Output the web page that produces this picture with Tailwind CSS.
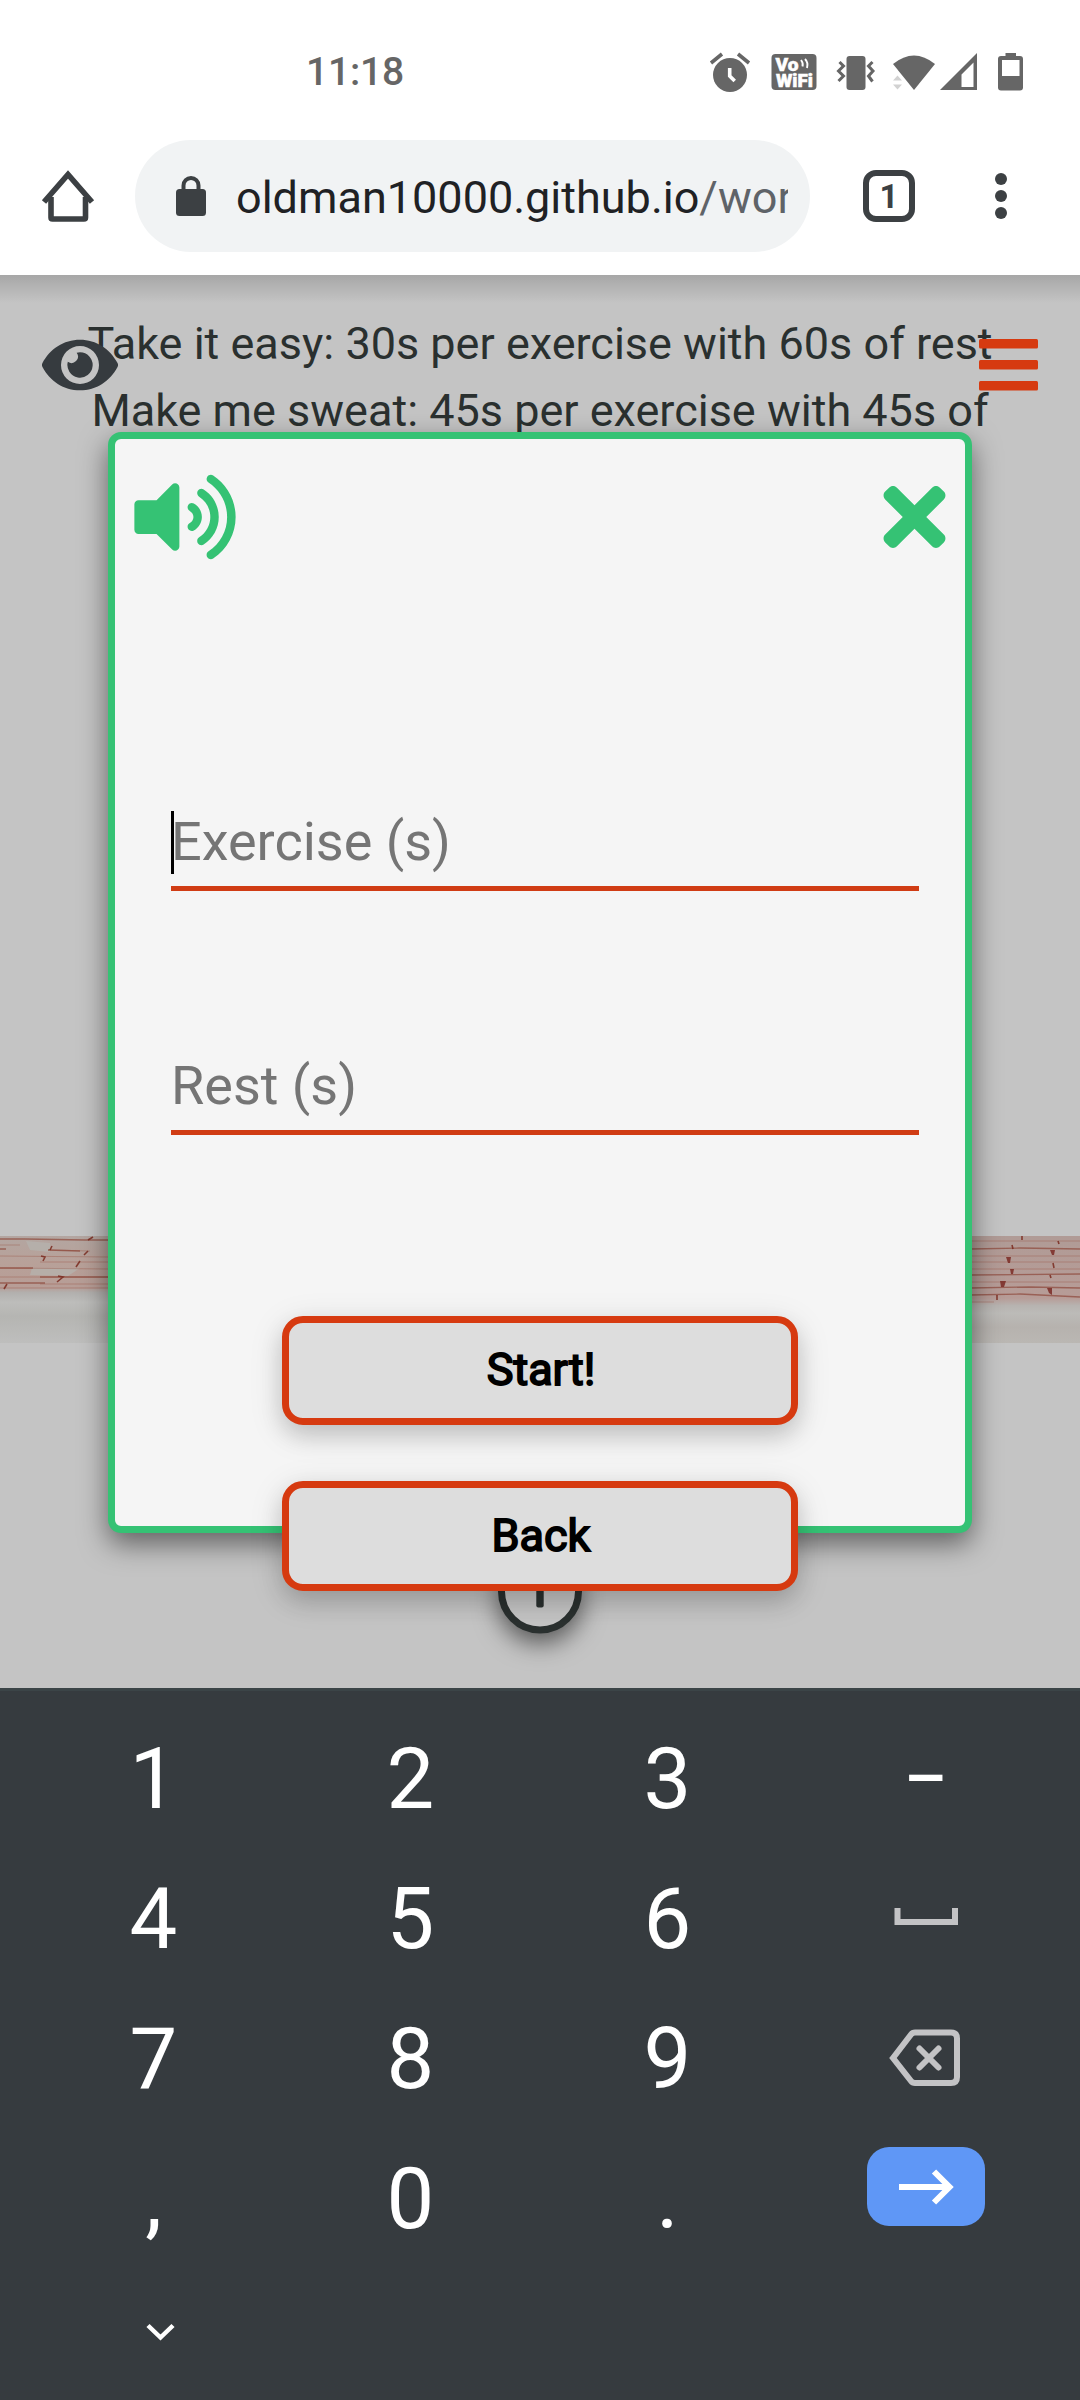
<!DOCTYPE html>
<html lang="en">
<head>
<meta charset="utf-8">
<title>Workout timer</title>
<script src="https://cdn.jsdelivr.net/npm/@tailwindcss/browser@4"></script>
</head>
<body class="w-[1080px] h-[2400px] flex flex-col overflow-hidden bg-white font-['Roboto',sans-serif]">

<!-- status bar -->
<header class="h-[275px] shrink-0 bg-white flex flex-col relative z-10">
  <div class="h-[140px] flex items-start justify-between pl-[306px] pr-[57px] text-[#666]">
    <div class="text-[39px] leading-[46px] font-medium mt-[49px] tracking-[-0.2px]">11:18</div>
    <svg class="mt-[50px]" width="317" height="48" viewBox="706 50 317 48" fill="#666">
      <circle cx="730" cy="75" r="17"/>
      <path d="M711 63l11-9M738 54l11 9" stroke="#666" stroke-width="3.6" fill="none"/>
      <path d="M729.7 68v8l5 5" stroke="#fff" stroke-width="3.6" fill="none"/>
      <rect x="771.500" y="54" width="45" height="36" rx="4"/>
      <g fill="#fff" stroke="#fff" stroke-width=".5" font-family="Roboto" font-weight="900"><text x="775.500" y="70.500" font-size="17.500" textLength="23" lengthAdjust="spacingAndGlyphs">Vo</text><text x="776" y="86.500" font-size="18" textLength="37" lengthAdjust="spacingAndGlyphs">WiFi</text></g>
      <path d="M801 60q2.500 3 1.500 6.500M805 59q3.500 3.500 2 9" stroke="#fff" stroke-width="1.900" fill="none"/>
      <rect x="846.500" y="56" width="19" height="34" rx="3"/>
      <path d="M839.500 62l4 4-5 5 5 5-5 5M872.500 62l-4 4 4.500 5-4.500 5 4 5.500" stroke="#666" stroke-width="3" fill="none"/>
      <path d="M893 64Q914 47 935 64L914 90Z"/>
      <path d="M893 80.500l4.500-5 4.500 5zM893 84.500l4.500 5 4.500-5z" fill="#d2d2d2"/>
      <path fill-rule="evenodd" d="M940 90L977 53V90ZM961.500 74.500V87H973.500V62.500Z"/>
      <path fill-rule="evenodd" d="M1005.500 53h10.500v3h4a3 3 0 0 1 3 3v28.500a3 3 0 0 1-3 3h-19a3 3 0 0 1-3-3V59a3 3 0 0 1 3-3h4.500zM1002 60v16h17.500V60z"/>
    </svg>
  </div>
  <!-- browser toolbar -->
  <div class="h-[112px] flex items-center">
    <svg class="ml-[40px]" width="56" height="56" viewBox="40 168 56 56" fill="none" stroke="#3c4043" stroke-width="5.600"><path d="M44 202L68 174.500L92 202"/><path d="M51 197V217.500q0 1.500 1.500 1.500H84q1.500 0 1.500-1.500V197"/></svg>
    <div class="ml-[39px] w-[675px] h-[112px] rounded-full bg-[#f1f3f4] flex items-center">
      <svg class="ml-[41px]" width="30" height="42" viewBox="0 0 30 42"><rect x="0" y="14" width="30" height="27" rx="3.500" fill="#3c4043"/><path d="M7.500 16V10.500a7.500 7.500 0 0 1 15 0V16" fill="none" stroke="#3c4043" stroke-width="4"/></svg>
      <div class="ml-[30px] pt-[3px] w-[552px] overflow-hidden whitespace-nowrap text-[45px] leading-[60px] text-[#202124]">oldman10000.github.io<span class="text-[#5f6368]">/workout</span></div>
    </div>
    <div class="ml-[53px] size-[52px] rounded-[13px] border-6 border-[#3c4043] flex items-center justify-center text-[33px] leading-none font-bold text-[#3c4043]">1</div>
    <div class="ml-[80px] flex flex-col gap-[5px]"><i class="size-3 rounded-full bg-[#3c4043]"></i><i class="size-3 rounded-full bg-[#3c4043]"></i><i class="size-3 rounded-full bg-[#3c4043]"></i></div>
  </div>
</header>

<!-- page -->
<main class="h-[1413px] shrink-0 relative bg-[#c4c4c4] overflow-hidden">
  <p class="pt-[35px] mx-[70px] text-center whitespace-nowrap text-[45px] leading-[67px] text-[#2a302f]">Take it easy: 30s per exercise with 60s of rest<br>Make me sweat: 45s per exercise with 45s of</p>
  <div class="absolute inset-x-0 top-0 h-7 bg-linear-to-b from-black/15 to-transparent"></div>
  <svg class="absolute left-[42px] top-[56px]" width="76" height="68" viewBox="0 0 576 512" fill="#363b3f"><path d="M572.520 241.400C518.290 135.590 410.930 64 288 64S57.680 135.640 3.480 241.410a32.350 32.350 0 0 0 0 29.190C57.710 376.410 165.070 448 288 448s230.320-71.640 284.520-177.410a32.350 32.350 0 0 0 0-29.190zM288 400a144 144 0 1 1 144-144 143.930 143.930 0 0 1-144 144zm0-240a95.310 95.310 0 0 0-25.310 3.790 47.850 47.850 0 0 1-66.900 66.900A95.780 95.780 0 1 0 288 160z"/></svg>
  <svg class="absolute left-[979px] top-[64px]" width="59" height="52" fill="#d63a10"><rect width="59" height="9.500" rx="1.500"/><rect y="21" width="59" height="9.500" rx="1.500"/><rect y="42" width="59" height="9.500" rx="1.500"/></svg>

  <!-- brick banner -->
  <svg class="absolute left-0 top-[961px]" width="1080" height="107" viewBox="0 0 1080 107">
    <defs>
      <linearGradient id="brick" x2="0" y2="1"><stop offset="0" stop-color="#b3a6a1"/><stop offset=".25" stop-color="#b8a199"/><stop offset=".48" stop-color="#b79d96"/><stop offset=".53" stop-color="#b2b0ae"/><stop offset=".62" stop-color="#bdbdbb"/><stop offset=".75" stop-color="#b5b5b2"/><stop offset="1" stop-color="#bebebd"/></linearGradient>
      <linearGradient id="brickr" x2="0" y2="1"><stop offset="0" stop-color="#b09b96"/><stop offset=".58" stop-color="#b79c97"/><stop offset=".65" stop-color="#b7b3b0"/><stop offset=".72" stop-color="#bcbbb8"/><stop offset=".85" stop-color="#b6b2ae"/><stop offset="1" stop-color="#bab7b3"/></linearGradient>
    </defs>
    <rect width="540" height="107" fill="url(#brick)"/><rect x="540" width="540" height="107" fill="url(#brickr)"/>
    <path d="M26 5l24 2v9l-20-2zM32 32h48l-12 8-38-1z" fill="#b5b1ac" opacity=".8"/>
    <g fill="none" stroke="#9b5446" stroke-width="1" opacity=".4"><path d="M0 9h20M48 14l42 1M0 20l110 1M40 26h70M0 32l110 1M0 41h110M40 48h70M0 52h110"/><path d="M970 5h110M970 20h110M970 26h110M970 33h110M970 46h110M970 66h24"/></g>
    <g fill="none" stroke="#8a4033" stroke-width="1.300" opacity=".65"><path d="M0 3h25l60 1h24M48 14l32 1M0 32h33M0 13h6M40 41h70M0 47h45"/><path d="M970 13l50-1 60 1M970 39l110-1M970 52l60-1 50 1M970 59l50-1 60 3"/></g>
    <g fill="none" stroke="#7a2a1e" stroke-width="1.600" opacity=".85"><path d="M88 4l5-3M50 14l2-4M84 19l4-4M41 20l4 1-2 4M76 31l4-6M58 40l5 1-6 5M7 48l-3 5"/><path d="M1022 0v4M1012 9l1 4M1053 27l1 5M1050 39l1 3M1058 5l1 3M997 59v5"/></g>
    <path d="M1006 21h5l-1 6h-2zM1010 33h4l-1 5h-2zM1000 45h6l-2 6h-3zM1050 14h5l-1 5h-2zM1047 52h5v7l-3-2z" fill="#7a2a24" opacity=".85"/>
  </svg>

  <!-- add button, behind the dialog -->
  <svg class="absolute left-[470px] top-[1255px] overflow-visible drop-shadow-[0_10px_12px_rgba(0,0,0,.55)]" width="140" height="110" viewBox="0 0 140 110"><circle cx="70" cy="61.500" r="38.500" fill="#c4c4c4" stroke="#2a302f" stroke-width="7"/><rect x="66.300" y="38" width="7.400" height="39.500" rx="2" fill="#2a302f"/><rect x="53" y="53.800" width="34" height="7.200" rx="2" fill="#2a302f"/></svg>

  <!-- timer dialog -->
  <section class="absolute left-[108px] top-[157px] w-[864px] h-[1101px] rounded-[13px] border-7 border-[#35c274] bg-[#f5f5f5] shadow-[0_11px_28px_rgba(0,0,0,0.5)] flex flex-col items-center">
    <div class="w-full h-[130px] shrink-0 flex justify-between items-start pt-[33px] pl-[19px] pr-[19px]">
      <svg width="102" height="90" viewBox="0 0 576 512" fill="#35c274"><path d="M215.030 71.050L126.060 160H24c-13.260 0-24 10.740-24 24v144c0 13.250 10.740 24 24 24h102.060l88.970 88.950c15.030 15.030 40.970 4.470 40.970-16.970V88.020c0-21.460-25.960-31.980-40.970-16.970zm233.320-51.120c-11.170-7.330-26.180-4.240-33.510 6.950-7.340 11.170-4.220 26.180 6.950 33.510 66.270 43.490 105.820 116.600 105.820 195.580 0 78.980-39.550 152.090-105.820 195.580-11.170 7.320-14.290 22.340-6.950 33.500 7.040 10.710 21.930 14.560 33.510 6.950C528.270 439.580 576 351.330 576 256S528.270 72.430 448.350 19.930zM480 256c0-63.530-32.060-121.940-85.770-156.240-11.190-7.140-26.030-3.820-33.120 7.460s-3.780 26.210 7.410 33.360C408.270 165.970 432 209.110 432 256s-23.730 90.030-63.480 115.420c-11.190 7.140-14.500 22.070-7.410 33.360 6.510 10.360 21.120 15.140 33.120 7.460C447.940 377.940 480 319.530 480 256zm-141.770-76.870c-11.580-6.330-26.190-2.160-32.610 9.450-6.390 11.610-2.160 26.200 9.450 32.610C327.980 228.280 336 241.630 336 256c0 14.380-8.020 27.720-20.920 34.810-11.610 6.410-15.840 21-9.450 32.610 6.430 11.660 21.050 15.800 32.610 9.450 28.230-15.550 45.770-45 45.770-76.880s-17.540-61.320-45.780-76.860z"/></svg>
      <svg width="63" height="90" viewBox="0 0 352 512" fill="#35c274"><path d="M242.720 256l100.070-100.070c12.280-12.280 12.280-32.190 0-44.480l-22.240-22.240c-12.280-12.280-32.190-12.280-44.480 0L176 189.280 75.930 89.210c-12.280-12.280-32.190-12.280-44.480 0L9.210 111.450c-12.280 12.280-12.280 32.190 0 44.480L109.280 256 9.210 356.070c-12.280 12.280-12.280 32.190 0 44.480l22.240 22.240c12.280 12.280 32.200 12.280 44.480 0L176 322.720l100.070 100.070c12.280 12.280 32.200 12.280 44.480 0l22.240-22.240c12.280-12.280 12.280-32.190 0-44.480L242.720 256z"/></svg>
    </div>
    <div class="mt-[242px] ml-[10px] w-[748px] h-[80px] shrink-0 border-b-5 border-[#d03c14] text-[#757575] text-[54px] leading-[61px] flex"><span class="w-[3px] -mr-[3px] h-[63px] bg-black"></span>Exercise (s)</div>
    <div class="mt-[164px] ml-[10px] w-[748px] h-[80px] shrink-0 border-b-5 border-[#d03c14] text-[#757575] text-[54px] leading-[61px]">Rest (s)</div>
    <button class="mt-[181px] w-[516px] h-[109px] shrink-0 rounded-[21px] border-7 border-[#d63a10] bg-[#ddd] shadow-[0_11px_22px_rgba(0,0,0,.13),0_8px_34px_rgba(0,0,0,.13)] text-[45px] leading-none text-black pl-0.5 pb-0.5 [-webkit-text-stroke:1.800px_black]">Start!</button>
    <button class="mt-[56px] w-[516px] h-[110px] shrink-0 rounded-[21px] border-7 border-[#d63a10] bg-[#ddd] shadow-[0_11px_22px_rgba(0,0,0,.13),0_8px_34px_rgba(0,0,0,.13)] text-[45px] leading-none text-black pl-0.5 pb-0.5 [-webkit-text-stroke:1.800px_black]">Back</button>
  </section>
</main>

<!-- numeric keyboard -->
<footer class="h-[712px] shrink-0 bg-[#363b3f] border-t-3 border-[#3b4447] pl-[25px] text-white">
  <div class="grid grid-cols-[257px_257px_257px_260px] auto-rows-[140px] text-[85px] leading-[140px] text-center pt-[18px]">
    <div>1</div><div>2</div><div>3</div>
    <div class="scale-x-80">–</div>
    <div>4</div><div>5</div><div>6</div>
    <svg width="260" height="140" viewBox="796 1849 260 140"><path d="M897.500 1908V1922H955V1908" fill="none" stroke="#c3c3c5" stroke-width="6"/></svg>
    <div>7</div><div>8</div><div>9</div>
    <svg width="260" height="140" viewBox="796 1989 260 140" fill="none" stroke="#c3c3c5" stroke-width="6"><path d="M893 2058L911 2034.500q1.500-2 4-2H951q6 0 6 6V2077q0 6-6 6H915q-2.500 0-4-2Z"/><path d="M919.500 2048.500l19 19M938.500 2048.500l-19 19" stroke-linecap="round"/></svg>
    <div>,</div><div>0</div><div>.</div>
    <div class="flex justify-center pt-[18px]"><div class="w-[118px] h-[79px] rounded-[22px] bg-[#5f97f6] flex items-center justify-center"><svg width="56" height="36" viewBox="0 0 56 36" fill="none" stroke="#fff" stroke-width="6"><path d="M1 18H51M36 2.500L51.500 18L36 33.500"/></svg></div></div>
  </div>
  <svg class="ml-[121px] mt-[54px]" width="30" height="20" viewBox="0 0 30 20" fill="none" stroke="#fff" stroke-width="4.500"><path d="M2 2.500L14.500 14.500L27 2.500"/></svg>
</footer>
</body>
</html>
